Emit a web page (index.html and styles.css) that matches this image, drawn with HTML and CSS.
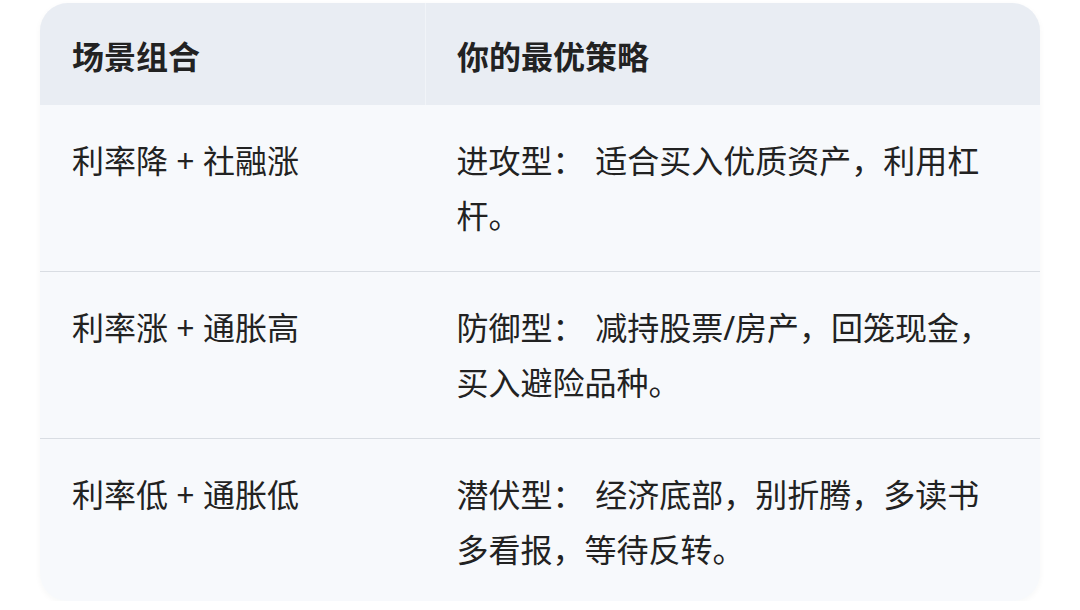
FILE: index.html
```html
<!DOCTYPE html>
<html lang="zh-CN">
<head>
<meta charset="utf-8">
<link rel="stylesheet" href="styles.css">
</head>
<body>
<div class="card">
  <table class="grid">
    <thead>
      <tr>
        <th class="c1">场景组合</th>
        <th class="c2">你的最优策略</th>
      </tr>
    </thead>
    <tbody>
      <tr>
        <td class="c1">利率降 + 社融涨</td>
        <td class="c2">进攻型：&#8196;适合买入优质资产，利用杠杆。</td>
      </tr>
      <tr>
        <td class="c1">利率涨 + 通胀高</td>
        <td class="c2">防御型：&#8196;减持股票/房产，回笼现金，买入避险品种。</td>
      </tr>
      <tr>
        <td class="c1">利率低 + 通胀低</td>
        <td class="c2">潜伏型：&#8196;经济底部，别折腾，多读书多看报，等待反转。</td>
      </tr>
    </tbody>
  </table>
</div>
</body>
</html>
```

FILE: styles.css
```css
html, body {
  margin: 0;
  padding: 0;
  background: #ffffff;
}
body {
  font-family: "Noto Sans", "Noto Sans CJK SC", sans-serif;
  color: #222222;
  padding: 3px 40px 0 40px;
}
.card {
  width: 1000px;
  height: 598px;
  border-radius: 28px;
  overflow: hidden;
  background: #f7f9fc;
  box-shadow: 0 2px 6px rgba(30, 40, 60, 0.04);
}
.grid {
  width: 100%;
  border-collapse: collapse;
  table-layout: fixed;
}
.grid th, .grid td {
  text-align: left;
  vertical-align: top;
  font-size: 32px;
  line-height: 55px;
  padding: 28px 32px;
}
.grid th {
  background: #e9edf3;
  font-weight: 700;
  padding-top: 26px;
  padding-bottom: 21px;
}
.grid th.c1 {
  border-right: 1px solid #f1f4f8;
}
.grid td {
  font-weight: 400;
  border-top: 1px solid #d9dde3;
}
.grid tbody tr:first-child td {
  border-top: none;
}
.c1 {
  width: 321px;
}
.grid th.c2, .grid td.c2 {
  padding-left: 31px;
  padding-right: 38px;
}
```
